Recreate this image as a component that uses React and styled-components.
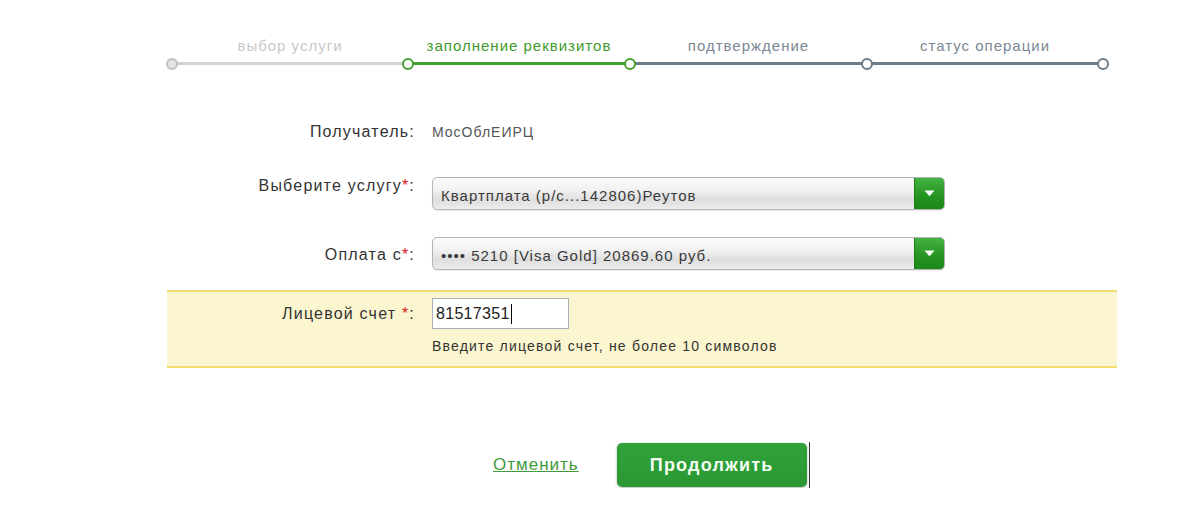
import React from "react";
import styled, { createGlobalStyle } from "styled-components";

const GlobalStyle = createGlobalStyle`
  body {
    margin: 0;
    background: #fff;
    font-family: Arial, "Liberation Sans", sans-serif;
    color: #333;
  }
`;

const steps = [
  { label: "выбор услуги", width: 236, state: "done" },
  { label: "заполнение реквизитов", width: 222, state: "active" },
  { label: "подтверждение", width: 237, state: "todo" },
  { label: "статус операции", width: 236, state: "todo" },
];

const lineColors = { done: "#d3d3d3", active: "#45a032", todo: "#6b7d8a" };
const labelColors = { done: "#c8c8c8", active: "#3f9a2c", todo: "#7b8894" };

function ArrowIcon() {
  return (
    <svg width="11" height="7" viewBox="0 0 11 7">
      <path d="M0.5 0.5 H10.5 L5.5 6.3 Z" fill="#fff" />
    </svg>
  );
}

function App() {
  return (
    <>
      <GlobalStyle />
      <Wrapper>
        <Stepper>
          {steps.map((s, i) => (
            <Step key={s.label} $w={s.width}>
              <StepLabel $state={s.state}>{s.label}</StepLabel>
              <StepLine $state={s.state}>
                <Node
                  $at="left"
                  $color={i === 0 ? "#c0c0c0" : i <= 2 ? "#45a032" : "#6b7d8a"}
                  $fill={i === 0 ? "#e6e6e6" : "#fff"}
                />
                {i === steps.length - 1 && <Node $at="right" $color="#6b7d8a" $fill="#fff" />}
              </StepLine>
            </Step>
          ))}
        </Stepper>

        <Form>
          <Row $top={58}>
            <Label>Получатель:</Label>
            <Value>МосОблЕИРЦ</Value>
          </Row>

          <Row $top={36}>
            <Label $pad={0}>
              Выберите услугу<Req>*</Req>:
            </Label>
            <Select>
              <SelectText>Квартплата (р/с...142806)Реутов</SelectText>
              <SelectArrow>
                <ArrowIcon />
              </SelectArrow>
            </Select>
          </Row>

          <Row $top={27}>
            <Label $pad={9}>
              Оплата с<Req>*</Req>:
            </Label>
            <Select>
              <SelectText>•••• 5210 [Visa Gold] 20869.60 руб.</SelectText>
              <SelectArrow>
                <ArrowIcon />
              </SelectArrow>
            </Select>
          </Row>

          <HighlightBand>
            <Row $top={0}>
              <Label $pad={7}>
                Лицевой счет <Req>*</Req>:
              </Label>
              <div>
                <FakeInput>
                  81517351
                  <Caret />
                </FakeInput>
                <Hint>Введите лицевой счет, не более 10 символов</Hint>
              </div>
            </Row>
          </HighlightBand>
        </Form>

        <Actions>
          <CancelLink href="#">Отменить</CancelLink>
          <PrimaryButton type="button">Продолжить</PrimaryButton>
          <Divider />
        </Actions>
      </Wrapper>
    </>
  );
}

export default App;

// Layout

const Wrapper = styled.div`
  width: 950px;
  margin-left: 167px;
  padding-top: 37px;
`;

// Stepper

const Stepper = styled.div`
  display: flex;
  padding-left: 5px;
`;

const Step = styled.div`
  width: ${(p) => p.$w}px;
  display: flex;
  flex-direction: column;
  align-items: center;
`;

const StepLabel = styled.div`
  font-size: 15px;
  letter-spacing: 1px;
  line-height: 18px;
  height: 18px;
  color: ${(p) => labelColors[p.$state]};
  margin-bottom: 7px;
  white-space: nowrap;
`;

const StepLine = styled.div`
  position: relative;
  width: 100%;
  height: 3px;
  background: ${(p) => lineColors[p.$state]};
`;

const Node = styled.span`
  position: absolute;
  top: 50%;
  ${(p) => (p.$at === "left" ? "left: 0;" : "left: 100%;")}
  width: 8px;
  height: 8px;
  margin: -6px 0 0 -6px;
  border: 2px solid ${(p) => p.$color};
  border-radius: 50%;
  background: ${(p) => p.$fill};
  z-index: 1;
`;

// Form

const Form = styled.div`
  display: flex;
  flex-direction: column;
`;

const Row = styled.div`
  display: grid;
  grid-template-columns: 248px 513px;
  column-gap: 17px;
  align-items: start;
  margin-top: ${(p) => p.$top}px;
`;

const Label = styled.div`
  text-align: right;
  font-size: 16px;
  letter-spacing: 1.2px;
  line-height: 18px;
  color: #333;
  padding-top: ${(p) => p.$pad || 0}px;
  white-space: nowrap;
`;

const Req = styled.span`
  color: #d42020;
`;

const Value = styled.div`
  font-size: 14px;
  letter-spacing: 1px;
  line-height: 18px;
  color: #555;
`;

const Select = styled.div`
  display: flex;
  height: 33px;
  box-sizing: border-box;
  border: 1px solid #b4b4b4;
  border-radius: 5px;
  overflow: hidden;
  background: linear-gradient(#fbfbfb 0%, #f1f1f1 40%, #dedede 70%, #ececec 100%);
  box-shadow: 0 1px 1px rgba(0, 0, 0, 0.08);
`;

const SelectText = styled.div`
  flex: 1;
  font-size: 15px;
  letter-spacing: 1px;
  line-height: 30px;
  padding: 3px 0 0 8px;
  box-sizing: border-box;
  color: #3a3a3a;
  white-space: nowrap;
  overflow: hidden;
`;

const SelectArrow = styled.div`
  width: 29px;
  display: flex;
  align-items: center;
  justify-content: center;
  background: linear-gradient(#44b244, #24931f 60%, #1c8718);
  border-left: 1px solid #1d7d1a;
`;

const HighlightBand = styled.div`
  margin-top: 20px;
  background: #fbf6cf;
  border-top: 2px solid #f1dd72;
  border-bottom: 2px solid #f1dd72;
  padding: 6px 0 12px;
`;

const FakeInput = styled.div`
  width: 137px;
  height: 31px;
  box-sizing: border-box;
  border: 1px solid #a9b0ba;
  background: #fff;
  font-size: 16px;
  letter-spacing: 0.3px;
  line-height: 29px;
  padding-left: 3px;
  color: #222;
  display: flex;
  align-items: center;
`;

const Caret = styled.span`
  display: inline-block;
  width: 1px;
  height: 20px;
  background: #000;
  margin-left: 1px;
`;

const Hint = styled.div`
  margin-top: 9px;
  font-size: 14px;
  letter-spacing: 1.2px;
  line-height: 16px;
  color: #333;
  white-space: nowrap;
`;

// Actions

const Actions = styled.div`
  display: flex;
  align-items: center;
  margin-top: 74px;
  padding-left: 326px;
`;

const CancelLink = styled.a`
  font-size: 17px;
  letter-spacing: 1px;
  color: #3e9a3a;
  text-decoration: underline;
  margin-right: 38px;
`;

const PrimaryButton = styled.button`
  width: 190px;
  height: 44px;
  border: none;
  border-radius: 5px;
  background: linear-gradient(#30a23a, #2a9833);
  box-shadow: 0 1px 3px rgba(0, 0, 0, 0.3);
  color: #f4fff2;
  font-family: Arial, "Liberation Sans", sans-serif;
  font-size: 18px;
  letter-spacing: 1.2px;
  font-weight: bold;
  cursor: pointer;
`;

const Divider = styled.span`
  width: 1px;
  height: 46px;
  background: #333;
  margin-left: 2px;
`;
